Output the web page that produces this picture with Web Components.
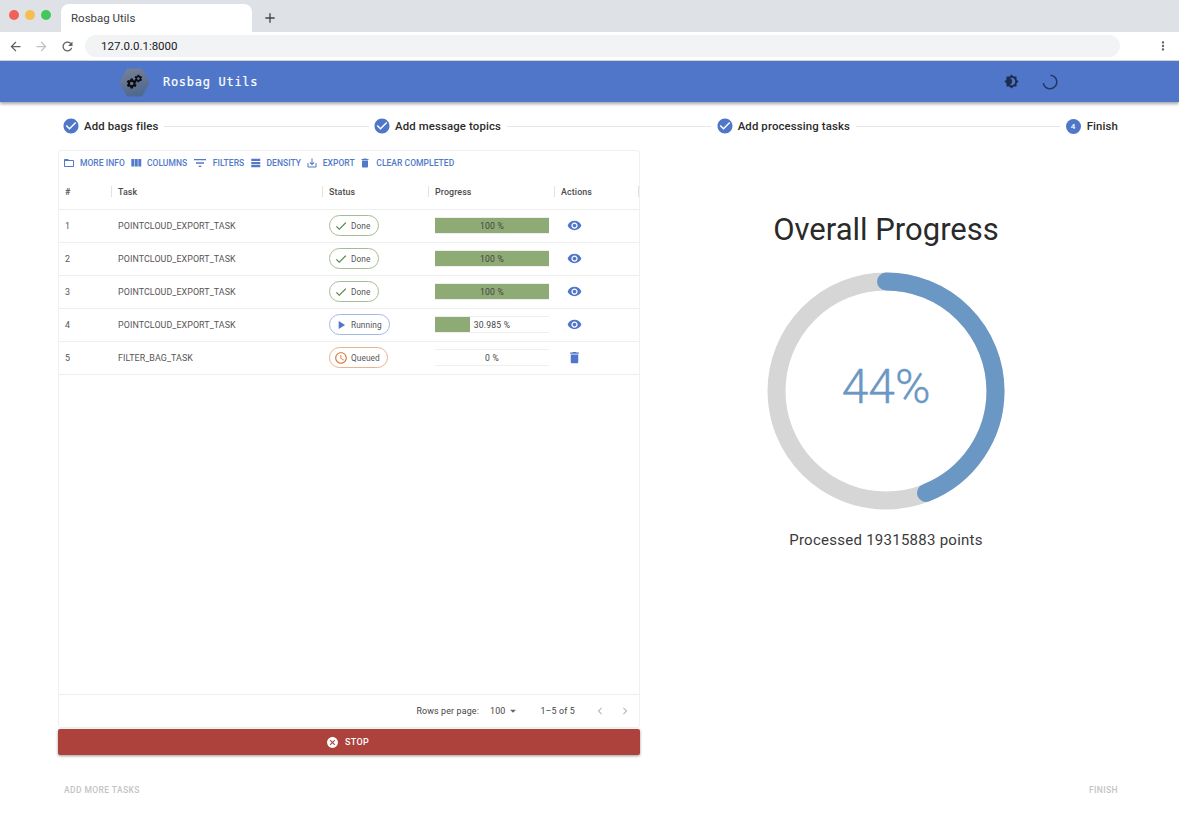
<!DOCTYPE html>
<html lang="en">
<head>
<meta charset="utf-8" />
<title>Rosbag Utils</title>
<style>
  html, body { margin: 0; height: 821px; overflow: hidden; background: #fff; }
  body { display: flex; flex-direction: column; font-family: Roboto, "Liberation Sans", sans-serif; color: #212121; }
</style>
</head>
<body>
<browser-chrome data-title="Rosbag Utils" data-url="127.0.0.1:8000"></browser-chrome>
<app-bar></app-bar>
<task-stepper></task-stepper>
<task-page></task-page>

<script>
const ICONS = {
  check_circle: "M12 2C6.48 2 2 6.48 2 12s4.48 10 10 10 10-4.48 10-10S17.52 2 12 2zm-2 15l-5-5 1.41-1.41L10 14.17l7.59-7.59L19 8l-9 9z",
  folder: "M20 6h-8l-2-2H4c-1.1 0-1.99.9-1.99 2L2 18c0 1.1.9 2 2 2h16c1.1 0 2-.9 2-2V8c0-1.1-.9-2-2-2zm0 12H4V8h16v10z",
  columns: "M10 18h5V5h-5v13zm-6 0h5V5H4v13zM16 5v13h5V5h-5z",
  filter: "M10 18h4v-2h-4v2zM3 6v2h18V6H3zm3 7h12v-2H6v2z",
  density: "M4 5h16v4H4zM4 10.5h16v4H4zM4 16h16v4H4z",
  export: "M19 12v7H5v-7H3v7c0 1.1.9 2 2 2h14c1.1 0 2-.9 2-2v-7h-2zm-6 .67l2.59-2.58L17 11.5l-5 5-5-5 1.41-1.41L11 12.67V3h2z",
  trash: "M6 19c0 1.1.9 2 2 2h8c1.1 0 2-.9 2-2V7H6v12zM19 4h-3.5l-1-1h-5l-1 1H5v2h14V4z",
  eye: "M12 4.5C7 4.5 2.73 7.61 1 12c1.73 4.39 6 7.5 11 7.5s9.27-3.11 11-7.5c-1.73-4.39-6-7.5-11-7.5zM12 17c-2.76 0-5-2.24-5-5s2.24-5 5-5 5 2.24 5 5-2.24 5-5 5zm0-8c-1.66 0-3 1.34-3 3s1.34 3 3 3 3-1.34 3-3-1.34-3-3-3z",
  check: "M9 16.17L4.83 12l-1.42 1.41L9 19 21 7l-1.41-1.41z",
  play: "M8 5v14l11-7z",
  clock: "M11.99 2C6.47 2 2 6.48 2 12s4.47 10 9.99 10C17.52 22 22 17.52 22 12S17.52 2 11.99 2zM12 20c-4.42 0-8-3.58-8-8s3.58-8 8-8 8 3.58 8 8-3.58 8-8 8zm.5-13H11v6l5.25 3.15.75-1.23-4.5-2.67z",
  cancel: "M12 2C6.47 2 2 6.47 2 12s4.47 10 10 10 10-4.47 10-10S17.53 2 12 2zm5 13.59L15.59 17 12 13.41 8.41 17 7 15.59 10.59 12 7 8.41 8.41 7 12 10.59 15.59 7 17 8.41 13.41 12 17 15.59z",
  brightness: "M20 8.69V4h-4.69L12 .69 8.69 4H4v4.69L.69 12 4 15.31V20h4.69L12 23.31 15.31 20H20v-4.69L23.31 12 20 8.69zM12 18c-.89 0-1.74-.2-2.5-.55C11.56 16.5 13 14.42 13 12s-1.44-4.5-3.5-5.45C10.26 6.2 11.11 6 12 6c3.31 0 6 2.69 6 6s-2.69 6-6 6z",
  back: "M20 11H7.83l5.59-5.59L12 4l-8 8 8 8 1.41-1.41L7.83 13H20v-2z",
  forward: "M12 4l-1.41 1.41L16.17 11H4v2h12.17l-5.58 5.59L12 20l8-8z",
  refresh: "M17.65 6.35C16.2 4.9 14.21 4 12 4c-4.42 0-7.99 3.58-7.99 8s3.57 8 7.99 8c3.73 0 6.84-2.55 7.73-6h-2.08c-.82 2.33-3.04 4-5.65 4-3.31 0-6-2.69-6-6s2.69-6 6-6c1.66 0 3.14.69 4.22 1.78L13 11h7V4l-2.35 2.35z",
  more: "M12 8c1.1 0 2-.9 2-2s-.9-2-2-2-2 .9-2 2 .9 2 2 2zm0 2c-1.1 0-2 .9-2 2s.9 2 2 2 2-.9 2-2-.9-2-2-2zm0 6c-1.1 0-2 .9-2 2s.9 2 2 2 2-.9 2-2-.9-2-2-2z",
  plus: "M19 13h-6v6h-2v-6H5v-2h6V5h2v6h6v2z",
  left: "M15.41 7.41L14 6l-6 6 6 6 1.41-1.41L10.83 12z",
  right: "M10 6L8.59 7.41 13.17 12l-4.58 4.59L10 18l6-6z",
  caret: "M7 10l5 5 5-5z",
  gear: "M19.43 12.98c.04-.32.07-.64.07-.98s-.03-.66-.07-.98l2.11-1.65c.19-.15.24-.42.12-.64l-2-3.46c-.12-.22-.39-.3-.61-.22l-2.49 1c-.52-.4-1.08-.73-1.69-.98l-.38-2.65C14.46 2.18 14.25 2 14 2h-4c-.25 0-.46.18-.49.42l-.38 2.65c-.61.25-1.17.59-1.69.98l-2.49-1c-.23-.09-.49 0-.61.22l-2 3.46c-.13.22-.07.49.12.64l2.11 1.65c-.04.32-.07.65-.07.98s.03.66.07.98l-2.11 1.65c-.19.15-.24.42-.12.64l2 3.46c.12.22.39.3.61.22l2.49-1c.52.4 1.08.73 1.69.98l.38 2.65c.03.24.24.42.49.42h4c.25 0 .46-.18.49-.42l.38-2.65c.61-.25 1.17-.59 1.69-.98l2.49 1c.23.09.49 0 .61-.22l2-3.46c.12-.22.07-.49-.12-.64l-2.11-1.65zM12 15.5c-1.93 0-3.5-1.57-3.5-3.5s1.57-3.5 3.5-3.5 3.5 1.57 3.5 3.5-1.57 3.5-3.5 3.5z"
};

class MIcon extends HTMLElement {
  connectedCallback() {
    const size = this.dataset.size || 12;
    const root = this.shadowRoot || this.attachShadow({ mode: "open" });
    root.innerHTML = `
      <style>
        :host { display: inline-flex; flex: none; width: ${size}px; height: ${size}px; }
        svg { width: 100%; height: 100%; fill: currentColor; display: block; }
      </style>
      <svg viewBox="0 0 24 24"><path d="${ICONS[this.dataset.name]}"></path></svg>`;
  }
}
customElements.define("m-icon", MIcon);

class BrowserChrome extends HTMLElement {
  connectedCallback() {
    const root = this.attachShadow({ mode: "open" });
    root.innerHTML = `
      <style>
        :host { display: block; flex: none; height: 61px; font-family: Roboto, "Liberation Sans", sans-serif; }
        .strip { height: 32px; background: #dee1e6; display: flex; align-items: flex-end; box-sizing: border-box; }
        .lights { display: flex; gap: 6px; padding: 0 10px 12px 9px; width: 42px; }
        .lights i { width: 10px; height: 10px; border-radius: 50%; flex: none; }
        .tab { width: 191px; height: 28px; background: #fff; border-radius: 8px 8px 0 0; display: flex; align-items: center; padding-left: 10px; box-sizing: border-box; font-size: 11.5px; color: #3c4043; }
        .new { margin: 0 0 6px 10px; color: #444; align-self: flex-end; }
        .bar { height: 28px; background: #fff; border-bottom: 1px solid #d5d7da; display: flex; align-items: center; box-sizing: content-box; padding-left: 8px; }
        .nav { display: flex; gap: 11px; width: 77px; color: #5f6368; }
        .nav .off { color: #bdc1c6; }
        .url { width: 1035px; height: 22px; border-radius: 11px; background: #f1f3f4; display: flex; align-items: center; padding-left: 16px; box-sizing: border-box; font-size: 11.5px; color: #202124; }
        .menu { margin-left: 36px; color: #5f6368; }
      </style>
      <div class="strip">
        <div class="lights">
          <i style="background:#f0615a"></i><i style="background:#f6bd4f"></i><i style="background:#43c75a"></i>
        </div>
        <div class="tab">${this.dataset.title}</div>
        <m-icon class="new" data-name="plus" data-size="16"></m-icon>
      </div>
      <div class="bar">
        <div class="nav">
          <m-icon data-name="back" data-size="15"></m-icon>
          <m-icon class="off" data-name="forward" data-size="15"></m-icon>
          <m-icon data-name="refresh" data-size="15"></m-icon>
        </div>
        <div class="url">${this.dataset.url}</div>
        <m-icon class="menu" data-name="more" data-size="14"></m-icon>
      </div>`;
  }
}
customElements.define("browser-chrome", BrowserChrome);

class AppBar extends HTMLElement {
  connectedCallback() {
    const root = this.attachShadow({ mode: "open" });
    root.innerHTML = `
      <style>
        :host { display: flex; flex: none; height: 41px; position: relative; z-index: 2; align-items: center; background: #4f76c8; box-shadow: 0 2px 3px rgba(0,0,0,.35); padding-left: 119px; box-sizing: border-box; }
        .logo { width: 31px; height: 29px; flex: none; display: block; margin-top: 1px; }
        .name { margin-left: 13px; font: 12px "DejaVu Sans Mono", "Liberation Mono", monospace; letter-spacing: 0.71px; -webkit-text-stroke: .2px #fff; color: #fff; width: 841px; }
        .mode { color: #1d2c4f; }
        .spin { margin-left: 23px; width: 16px; height: 16px; display: block; }
      </style>
      <svg class="logo" viewBox="0 0 31 29">
        <defs><linearGradient id="hex" x1="0" y1="0" x2="0.3" y2="1"><stop offset="0" stop-color="#7b8197"></stop><stop offset="1" stop-color="#4f6a8f"></stop></linearGradient></defs>
        <path d="M8 .5H23L30.8 14.5 23 28.5H8L.2 14.5Z" fill="url(#hex)"></path>
        <g fill="#0c0c10" fill-rule="evenodd">
          <path transform="translate(6.7 9.5) scale(.5)" d="${ICONS.gear}"></path>
          <path transform="translate(14.8 6) scale(.38)" d="${ICONS.gear}"></path>
        </g>
      </svg>
      <div class="name">Rosbag Utils</div>
      <m-icon class="mode" data-name="brightness" data-size="15"></m-icon>
      <svg class="spin" viewBox="0 0 16 16"><path d="M8.5 1.2A6.8 6.8 0 1 1 1.3 9" fill="none" stroke="#26365c" stroke-width="1.5"></path></svg>`;
  }
}
customElements.define("app-bar", AppBar);

class TaskStepper extends HTMLElement {
  connectedCallback() {
    const root = this.attachShadow({ mode: "open" });
    const steps = ["Add bags files", "Add message topics", "Add processing tasks"];
    const done = steps.map((s) => `
      <div class="step"><m-icon data-name="check_circle" data-size="18"></m-icon><span>${s}</span></div>
      <div class="line"></div>`).join("");
    root.innerHTML = `
      <style>
        :host { display: flex; flex: none; height: 48px; align-items: center; padding: 0 61px 0 62px; box-sizing: border-box; font: 500 11.4px Roboto, sans-serif; color: #2c2c2c; letter-spacing: .12px; }
        .step { display: flex; align-items: center; gap: 4px; flex: none; }
        .step m-icon { color: #4f76c8; }
        .line { flex: 1; height: 1px; background: #e6e6e6; margin: 0 4.5px 0 6px; }
        .num { width: 15px; height: 15px; margin: 0 2px 0 1px; border-radius: 50%; background: #4f76c8; color: #fff; font-size: 8px; display: flex; align-items: center; justify-content: center; }
      </style>
      ${done}
      <div class="step"><div class="num">4</div><span>Finish</span></div>`;
  }
}
customElements.define("task-stepper", TaskStepper);

class StatusChip extends HTMLElement {
  connectedCallback() {
    const root = this.attachShadow({ mode: "open" });
    const kinds = {
      Done: { icon: "check", color: "#4f7f3f", border: "#a4bd96" },
      Running: { icon: "play", color: "#4f76c8", border: "#a3b7e3" },
      Queued: { icon: "clock", color: "#d9763a", border: "#e8b48f" }
    };
    const kind = kinds[this.dataset.status];
    root.innerHTML = `
      <style>
        :host { display: inline-flex; align-items: center; height: 21px; box-sizing: border-box; border: 1px solid ${kind.border}; border-radius: 11px; padding: 0 7px 0 4px; gap: 3px; font-size: 8.3px; color: #555; background: #fff; }
        m-icon { color: ${kind.color}; }
      </style>
      <m-icon data-name="${kind.icon}" data-size="14"></m-icon><span>${this.dataset.status}</span>`;
  }
}
customElements.define("status-chip", StatusChip);

class ProgressCell extends HTMLElement {
  connectedCallback() {
    const root = this.attachShadow({ mode: "open" });
    const value = this.dataset.value;
    root.innerHTML = `
      <style>
        :host { display: grid; width: 114px; height: 17px; box-sizing: border-box; border: 1px solid #eeeeee; border-left: 0; border-right: 0; font-size: 8.6px; color: #444; letter-spacing: .2px; }
        .fill, .text { grid-area: 1 / 1; }
        .fill { background: #8fab75; width: ${value}%; }
        .text { display: flex; align-items: center; justify-content: center; z-index: 1; }
      </style>
      <div class="fill"></div><div class="text">${value} %</div>`;
  }
}
customElements.define("progress-cell", ProgressCell);

class TaskRow extends HTMLElement {
  connectedCallback() {
    const root = this.attachShadow({ mode: "open" });
    const isQueued = this.dataset.status === "Queued";
    root.innerHTML = `
      <style>
        :host { display: grid; grid-template-columns: 53px 211px 106px 126px 84px; height: 33px; box-sizing: border-box; padding-bottom: 1px; border-bottom: 1px solid #eeeeee; font-size: 8.9px; color: #555; letter-spacing: .09px; }
        div { display: flex; align-items: center; padding-left: 6px; }
        .act { padding-left: 11.5px; color: #4f76c8; }
      </style>
      <div>${this.dataset.id}</div>
      <div>${this.dataset.task}</div>
      <div><status-chip data-status="${this.dataset.status}"></status-chip></div>
      <div><progress-cell data-value="${this.dataset.value}"></progress-cell></div>
      <div class="act"><m-icon data-name="${isQueued ? "trash" : "eye"}" data-size="15"></m-icon></div>`;
  }
}
customElements.define("task-row", TaskRow);

class GridToolbar extends HTMLElement {
  connectedCallback() {
    const root = this.attachShadow({ mode: "open" });
    // icon, label, icon size, gap to label, gap before the item
    const items = [
      ["folder", "MORE INFO", 12, 5, 0], ["columns", "COLUMNS", 14, 4, 4], ["filter", "FILTERS", 16, 4.7, 5],
      ["density", "DENSITY", 13.5, 4, 4.7], ["export", "EXPORT", 12, 5, 4.7], ["trash", "CLEAR COMPLETED", 12, 5, 4.7]
    ];
    root.innerHTML = `
      <style>
        :host { display: flex; align-items: center; height: 24px; padding-left: 4px; font: 500 8.5px Roboto, sans-serif; color: #5279ca; letter-spacing: .04px; }
        .item { display: flex; align-items: center; flex: none; }
      </style>
      ${items.map(([icon, label, size, gap, before]) => `
        <div class="item" style="gap:${gap}px;margin-left:${before}px"><m-icon data-name="${icon}" data-size="${size}"></m-icon><span>${label}</span></div>`).join("")}`;
  }
}
customElements.define("grid-toolbar", GridToolbar);

class GridHeader extends HTMLElement {
  connectedCallback() {
    const root = this.attachShadow({ mode: "open" });
    const cols = ["#", "Task", "Status", "Progress", "Actions"];
    root.innerHTML = `
      <style>
        :host { display: grid; grid-template-columns: 53px 211px 106px 126px 84px; height: 35px; box-sizing: border-box; padding-bottom: 1px; border-bottom: 1px solid #eeeeee; font: 500 8.9px Roboto, sans-serif; color: #4c4c4c; letter-spacing: .1px; }
        div { display: flex; align-items: center; padding-left: 6px; position: relative; }
        div::after { content: ""; position: absolute; right: 0; top: 11px; bottom: 11px; width: 1px; background: #e2e2e2; }
      </style>
      ${cols.map((c) => `<div>${c}</div>`).join("")}`;
  }
}
customElements.define("grid-header", GridHeader);

class GridFooter extends HTMLElement {
  connectedCallback() {
    const root = this.attachShadow({ mode: "open" });
    root.innerHTML = `
      <style>
        :host { display: flex; flex: none; align-items: center; justify-content: flex-end; height: 33px; box-sizing: border-box; border-top: 1px solid #eeeeee; padding-right: 7px; font-size: 8.9px; color: #444; letter-spacing: .15px; }
        .rows { margin-right: 11px; }
        .size { display: flex; align-items: center; gap: 1px; margin-right: 20px; }
        .range { margin-right: 18px; }
        .pager { display: flex; gap: 11px; color: #bbbbbb; }
      </style>
      <span class="rows">Rows per page:</span>
      <span class="size">100 <m-icon data-name="caret" data-size="14" style="color:#666"></m-icon></span>
      <span class="range">1–5 of 5</span>
      <span class="pager"><m-icon data-name="left" data-size="14"></m-icon><m-icon data-name="right" data-size="14"></m-icon></span>`;
  }
}
customElements.define("grid-footer", GridFooter);

class TaskGrid extends HTMLElement {
  connectedCallback() {
    const root = this.attachShadow({ mode: "open" });
    const tasks = [
      [1, "POINTCLOUD_EXPORT_TASK", "Done", 100],
      [2, "POINTCLOUD_EXPORT_TASK", "Done", 100],
      [3, "POINTCLOUD_EXPORT_TASK", "Done", 100],
      [4, "POINTCLOUD_EXPORT_TASK", "Running", 30.985],
      [5, "FILTER_BAG_TASK", "Queued", 0]
    ];
    root.innerHTML = `
      <style>
        :host { display: flex; flex-direction: column; height: 578px; box-sizing: border-box; border: 1px solid #f0f0f0; border-radius: 3px; font-family: Roboto, "Liberation Sans", sans-serif; }
        .rows { flex: 1; }
      </style>
      <grid-toolbar></grid-toolbar>
      <grid-header></grid-header>
      <div class="rows">
        ${tasks.map(([id, task, status, value]) => `<task-row data-id="${id}" data-task="${task}" data-status="${status}" data-value="${value}"></task-row>`).join("")}
      </div>
      <grid-footer></grid-footer>`;
  }
}
customElements.define("task-grid", TaskGrid);

class OverallProgress extends HTMLElement {
  connectedCallback() {
    const root = this.attachShadow({ mode: "open" });
    const pct = Number(this.dataset.value);
    const r = 109.5;
    const c = 2 * Math.PI * r;
    root.innerHTML = `
      <style>
        :host { display: flex; flex-direction: column; align-items: center; padding-top: 62px; font-family: Roboto, "Liberation Sans", sans-serif; color: #212121; }
        h2 { margin: 0; font-size: 31px; line-height: 36px; font-weight: 400; color: #2a2a2a; }
        .ring { display: grid; margin-top: 24px; width: 238px; height: 238px; }
        .ring > * { grid-area: 1 / 1; }
        svg { width: 238px; height: 238px; display: block; transform: rotate(-90deg); }
        .pct { display: flex; align-items: center; justify-content: center; font-size: 48px; font-weight: 300; -webkit-text-stroke: .35px #6b97c4; color: #6b97c4; padding-bottom: 10px; box-sizing: border-box; }
        p { margin: 21px 0 0; font-size: 15px; line-height: 18px; letter-spacing: .26px; color: #3a3a3a; }
      </style>
      <h2>Overall Progress</h2>
      <div class="ring">
        <svg viewBox="0 0 238 238">
          <circle cx="119" cy="119" r="${r}" fill="none" stroke="#d6d6d6" stroke-width="18"></circle>
          <circle cx="119" cy="119" r="${r}" fill="none" stroke="#6b97c4" stroke-width="18" stroke-linecap="round" stroke-dasharray="${c * pct / 100} ${c}"></circle>
        </svg>
        <div class="pct">${pct}%</div>
      </div>
      <p>Processed ${this.dataset.points} points</p>`;
  }
}
customElements.define("overall-progress", OverallProgress);

class TaskPage extends HTMLElement {
  connectedCallback() {
    const root = this.attachShadow({ mode: "open" });
    root.innerHTML = `
      <style>
        :host { display: grid; flex: 1; grid-template-columns: 582px 492px; grid-template-rows: 605px 1fr; padding-left: 58px; font-family: Roboto, "Liberation Sans", sans-serif; }
        .left { display: flex; flex-direction: column; gap: 1px; }
        .stop { display: flex; align-items: center; justify-content: center; gap: 6px; height: 26px; background: #ad413c; color: #fff; border: 0; border-radius: 2px; padding: 0 3px 0 0; box-shadow: 0 1px 3px rgba(0,0,0,.4); font: 500 9px Roboto, sans-serif; letter-spacing: .3px; }
        .foot { grid-column: 1 / 3; display: flex; justify-content: space-between; align-items: flex-start; padding: 30px 14px 0 6px; font: 500 8.5px Roboto, sans-serif; letter-spacing: .4px; color: #c4c4c4; }
      </style>
      <div class="left">
        <task-grid></task-grid>
        <button class="stop"><m-icon data-name="cancel" data-size="13"></m-icon>STOP</button>
      </div>
      <overall-progress data-value="44" data-points="19315883"></overall-progress>
      <div class="foot"><span>ADD MORE TASKS</span><span>FINISH</span></div>`;
  }
}
customElements.define("task-page", TaskPage);
</script>
</body>
</html>
